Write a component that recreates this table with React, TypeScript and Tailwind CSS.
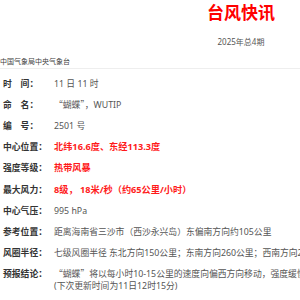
import React from "react";

const Q = ({ children }: { children: React.ReactNode }) => (
  <span style={{ fontFamily: '"Noto Sans CJK SC", sans-serif' }}>{children}</span>
);

const rows: { label: string; value: React.ReactNode; red?: boolean }[] = [
  { label: "时　间：", value: "11 日 11 时" },
  { label: "命　名：", value: (<><Q>“蝴蝶”，</Q>WUTIP</>) },
  { label: "编　号：", value: "2501 号" },
  { label: "中心位置：", value: "北纬16.6度、东经113.3度", red: true },
  { label: "强度等级：", value: "热带风暴", red: true },
  { label: "最大风力：", value: "8级， 18米/秒（约65公里/小时）", red: true },
  { label: "中心气压：", value: "995 hPa" },
  { label: "参考位置：", value: "距离海南省三沙市（西沙永兴岛）东偏南方向约105公里" },
  {
    label: "风圈半径：",
    value: "七级风圈半径 东北方向150公里；东南方向260公里；西南方向260公里；西北方向150公里",
  },
];

export default function App() {
  return (
    <div
      className="w-[482px] bg-white text-[#333]"
      style={{ fontFamily: '"Noto Sans", "Noto Sans CJK SC", sans-serif' }}
    >
      <div className="flex h-[24px] items-center justify-center text-[17px] font-bold leading-none text-[#ff0000]">
        台风快讯
      </div>
      <div className="mt-[12px] h-[12px] text-center text-[8px] leading-[12px] text-[#555]">
        2025年总4期
      </div>
      <div className="mt-[8px] h-[13px] border-b border-[#eeeeee] text-[7px] leading-[12px] text-[#444]">
        中国气象局中央气象台
      </div>
      <div className="mt-[4px] flex flex-col">
        {rows.map((r) => (
          <div key={r.label} className="flex h-[21.2px] items-center whitespace-nowrap leading-[12px]">
            <div className="w-[54px] shrink-0 pl-[3px] text-[8.8px] font-bold text-[#333]">{r.label}</div>
            <div className={r.red ? "text-[9.2px] font-bold text-[#ff1a1a]" : "text-[8.8px] text-[#555]"}>{r.value}</div>
          </div>
        ))}
        <div className="flex items-start whitespace-nowrap py-[4.6px] leading-[12px]">
          <div className="w-[54px] shrink-0 pl-[3px] text-[8.8px] font-bold text-[#333]">预报结论：</div>
          <div className="text-[8.8px] text-[#555]">
            <div><Q>“蝴蝶”</Q>将以每小时10-15公里的速度向偏西方向移动，强度缓慢增强。</div>
            <div>(下次更新时间为11日12时15分)</div>
          </div>
        </div>
      </div>
    </div>
  );
}
